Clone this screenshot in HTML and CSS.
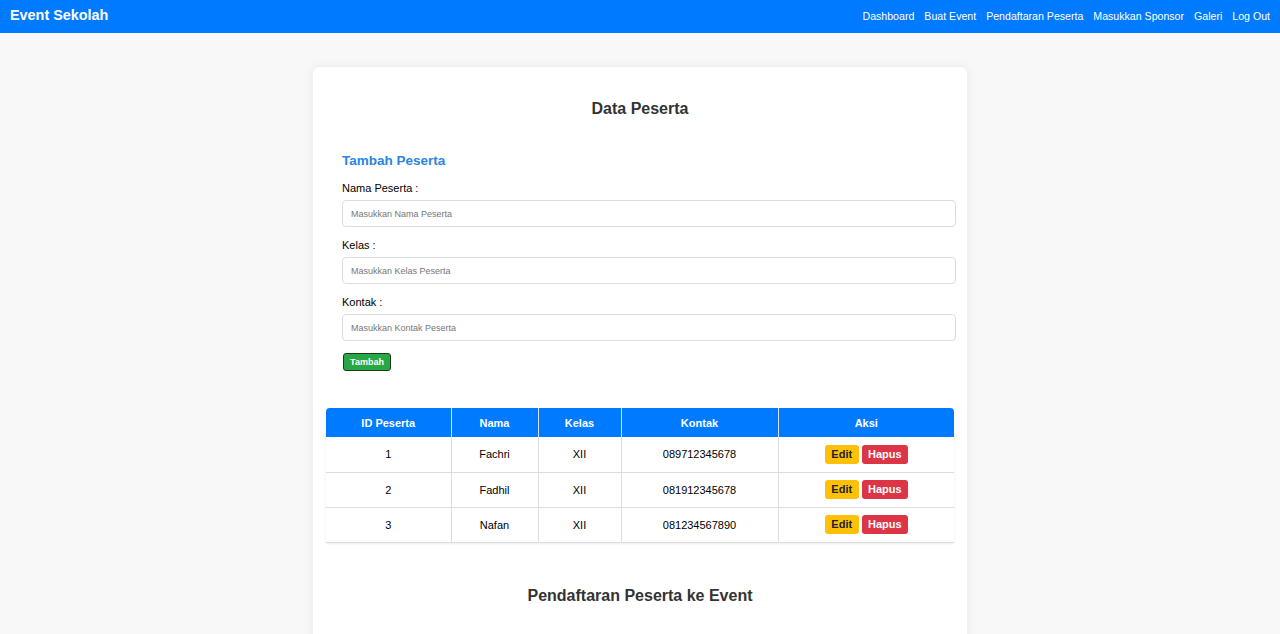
FILE: index.html
```html
<!DOCTYPE html>
<html lang="id">
<head>
<meta charset="utf-8">
<title>Data Peserta</title>
<link rel="stylesheet" href="styles.css">
</head>
<body>
<nav class="navbar">
  <div class="brand">Event Sekolah</div>
  <ul class="nav-links">
    <li><a href="#">Dashboard</a></li>
    <li><a href="#">Buat Event</a></li>
    <li><a href="#">Pendaftaran Peserta</a></li>
    <li><a href="#">Masukkan Sponsor</a></li>
    <li><a href="#">Galeri</a></li>
    <li><a href="#">Log Out</a></li>
  </ul>
</nav>
<main class="card">
  <h2 class="title">Data Peserta</h2>
  <form class="form">
    <h3 class="subtitle">Tambah Peserta</h3>
    <label class="label">Nama Peserta :</label>
    <input class="input" type="text" placeholder="Masukkan Nama Peserta">
    <label class="label">Kelas :</label>
    <input class="input" type="text" placeholder="Masukkan Kelas Peserta">
    <label class="label">Kontak :</label>
    <input class="input" type="text" placeholder="Masukkan Kontak Peserta">
    <div class="actions"><button class="btn-add" type="button">Tambah</button></div>
  </form>
  <table class="table">
    <thead>
      <tr><th class="c1">ID Peserta</th><th class="c2">Nama</th><th class="c3">Kelas</th><th class="c4">Kontak</th><th class="c5">Aksi</th></tr>
    </thead>
    <tbody>
      <tr><td>1</td><td>Fachri</td><td>XII</td><td>089712345678</td><td><span class="btn edit">Edit</span><span class="btn hapus">Hapus</span></td></tr>
      <tr><td>2</td><td>Fadhil</td><td>XII</td><td>081912345678</td><td><span class="btn edit">Edit</span><span class="btn hapus">Hapus</span></td></tr>
      <tr><td>3</td><td>Nafan</td><td>XII</td><td>081234567890</td><td><span class="btn edit">Edit</span><span class="btn hapus">Hapus</span></td></tr>
    </tbody>
  </table>
  <h2 class="title title-2">Pendaftaran Peserta ke Event</h2>
</main>
</body>
</html>
```
FILE: styles.css
```css
* { box-sizing: border-box; }
html, body { margin: 0; padding: 0; }
body {
  font-family: "Liberation Sans", Arial, sans-serif;
  background: #f8f8f8;
  color: #222;
  height: 634px;
  overflow: hidden;
}
.navbar {
  height: 33px;
  background: #007bff;
  color: #fff;
  display: flex;
  align-items: center;
  justify-content: space-between;
  padding: 0 10px;
}
.brand { font-size: 14.4px; font-weight: bold; margin-top: -3px; }
.nav-links {
  list-style: none;
  display: flex;
  gap: 10px;
  margin: -3px 0 0;
  padding: 0;
}
.nav-links a {
  color: #fff;
  text-decoration: none;
  font-size: 10.6px;
}
.card {
  width: 654px;
  margin: 34px auto 0;
  background: #fff;
  border-radius: 6px;
  box-shadow: 0 0 10px rgba(0,0,0,0.08);
  padding: 32px 13px 44px;
}
.title {
  margin: 0;
  text-align: center;
  font-size: 16px;
  line-height: 20px;
  color: #333;
}
.form {
  padding: 16px;
  margin-top: 17px;
}
.subtitle {
  margin: 0;
  font-size: 13.5px;
  line-height: 18px;
  color: #2a85e4;
}
.label {
  display: block;
  font-size: 11px;
  line-height: 14px;
  margin: 11px 0 5px;
  color: #000;
}
.input {
  display: block;
  width: calc(100% + 18px);
  height: 27px;
  padding: 0 8px;
  border: 1px solid #ddd;
  border-radius: 4px;
  font-family: inherit;
  font-size: 9px;
  color: #333;
}
.input::placeholder { color: #777; }
.actions { margin-top: 10px; }
.btn-add {
  background: #28a745;
  color: #fff;
  border: 1px solid #1e3a1e;
  border-radius: 3px;
  font-family: inherit;
  font-size: 9px;
  font-weight: bold;
  height: 18px;
  padding: 0 6px;
  width: 48px;
  margin-left: 1px;
}
.table {
  width: 628px;
  margin-top: 21px;
  border-collapse: collapse;
  font-size: 11px;
  box-shadow: 0 1px 3px rgba(0,0,0,0.08);
  border-radius: 4px 4px 0 0;
  overflow: hidden;
}
.table th {
  background: #007bff;
  color: #fff;
  height: 29px;
  font-weight: bold;
  border-right: 1px solid #d6e4f5;
  padding: 0;
}
.table th:last-child, .table td:last-child { border-right: none; }
.table td {
  height: 35px;
  text-align: center;
  border-right: 1px solid #ddd;
  border-bottom: 1px solid #ddd;
  padding: 0;
  color: #000;
}
.c1 { width: 125px; }
.c2 { width: 87px; }
.c3 { width: 83px; }
.c4 { width: 157px; }
.btn {
  display: inline-block;
  font-weight: bold;
  font-size: 11px;
  line-height: 19px;
  border-radius: 3px;
  vertical-align: middle;
}
.edit { background: #ffc107; color: #222; width: 34px; }
.hapus { background: #dc3545; color: #fff; width: 46px; margin-left: 3px; }
.title-2 { margin-top: 43px; }
```
